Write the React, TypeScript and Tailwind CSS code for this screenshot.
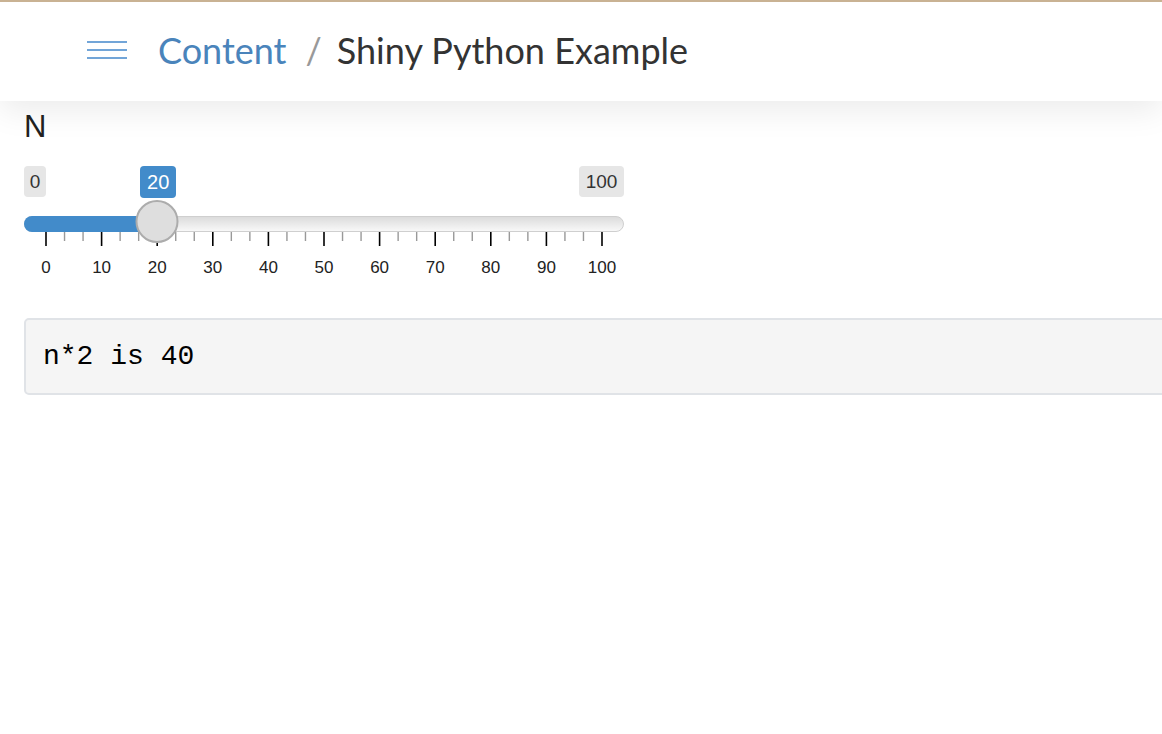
import React from "react";

const MAJOR = [0, 10, 20, 30, 40, 50, 60, 70, 80, 90, 100];

function tickX(v: number) {
  // scale runs from 22px to 578px inside the 600px slider
  return 22 + (v / 100) * 556;
}

function Slider({ value }: { value: number }) {
  const x = tickX(value);
  return (
    <div className="relative w-[600px] h-[116px] font-['Liberation_Sans',Arial,sans-serif]">
      {/* min / max / value badges */}
      <div className="absolute left-0 top-0 w-[22px] h-[31px] rounded-[4px] bg-[#e6e6e6] text-[#333] text-[19px] leading-[31px] text-center">
        0
      </div>
      <div className="absolute right-0 top-0 w-[45px] h-[31px] rounded-[4px] bg-[#e6e6e6] text-[#333] text-[19px] leading-[31px] text-center">
        100
      </div>
      <div
        className="absolute top-0 w-[36px] h-[32px] -translate-x-1/2 rounded-[4px] bg-[#428bca] text-white text-[20px] leading-[32px] text-center"
        style={{ left: x + 1 }}
      >
        {value}
      </div>

      {/* track */}
      <div className="absolute left-0 top-[50px] w-full h-[16px] rounded-full border border-[#cfcfcf] bg-gradient-to-b from-[#dcdcdc] to-[#f8f8f8]" />
      <div
        className="absolute left-0 top-[50px] h-[16px] rounded-l-full bg-[#428bca]"
        style={{ width: x }}
      />

      {/* ticks */}
      <svg className="absolute left-0 top-[66px]" width="600" height="16">
        {Array.from({ length: 31 }).map((_, k) => {
          const tx = 22 + k * (556 / 30);
          const major = k % 3 === 0;
          return (
            <line
              key={k}
              x1={tx}
              x2={tx}
              y1={0}
              y2={major ? 14 : 9}
              stroke={major ? "#000" : "#999"}
              strokeWidth={major ? 1.6 : 1.4}
            />
          );
        })}
      </svg>
      {MAJOR.map((v) => (
        <span
          key={v}
          className="absolute top-[92px] -translate-x-1/2 text-[17px] leading-[20px] text-[#222]"
          style={{ left: tickX(v) }}
        >
          {v}
        </span>
      ))}

      {/* handle */}
      <div
        className="absolute top-[34px] w-[43px] h-[43px] -translate-x-1/2 rounded-full border-2 border-[#acacac] bg-[#dedede]"
        style={{ left: x }}
      />
    </div>
  );
}

export default function App() {
  const n = 20;

  return (
    <div className="min-h-screen bg-white overflow-hidden">
      {/* header */}
      <header className="relative z-10 h-[101px] border-t-2 border-[#c9b293] bg-white shadow-[0_10px_30px_rgba(0,0,0,0.08)] flex items-center pl-[87px] pb-[4px] font-['Lato','Noto_Sans',sans-serif]">
        <div className="flex flex-col gap-[6px] w-[40px]">
          <div className="h-[2px] bg-[#72a5d8]" />
          <div className="h-[2px] bg-[#72a5d8]" />
          <div className="h-[2px] bg-[#72a5d8]" />
        </div>
        <span className="ml-[31px] text-[36px] text-[#4a84bb]">Content</span>
        <span className="ml-[19px] mr-[15px] text-[36px] text-[#999]">/</span>
        <span className="text-[36px] text-[#333]">Shiny Python Example</span>
      </header>

      <main className="px-[24px] pt-[8px]">
        <label className="block text-[31px] leading-[36px] text-[#222] font-['Liberation_Sans',Arial,sans-serif]">
          N
        </label>

        <div className="mt-[21px]">
          <Slider value={n} />
        </div>

        {/* output */}
        <div className="mt-[36px] w-[1200px] h-[77px] flex items-center pl-[17px] rounded-[5px] border-2 border-[#e0e3e7] bg-[#f5f5f5]">
          <pre className="font-['Liberation_Mono','DejaVu_Sans_Mono',monospace] text-[28px] text-black">
            n*2 is {n * 2}
          </pre>
        </div>
      </main>
    </div>
  );
}
